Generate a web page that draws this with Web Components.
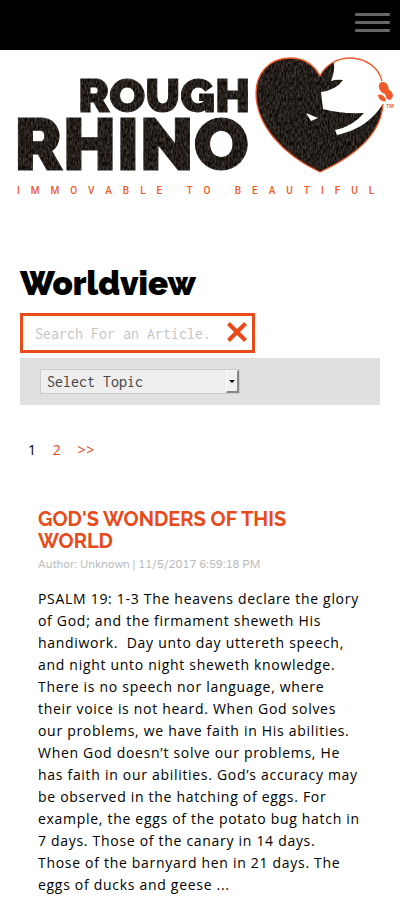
<!DOCTYPE html>
<html lang="en">
<head>
<meta charset="utf-8">
<meta name="viewport" content="width=device-width, initial-scale=1">
<title>Worldview - Rough Rhino</title>
<style>
  body { margin: 0; background: #fff; color: #000; font-family: "Open Sans", "Noto Sans", sans-serif; --accent: #e84a1a; }
</style>
</head>
<body>
<site-header></site-header>
<rhino-logo></rhino-logo>
<blog-page heading="Worldview">
  <article-search></article-search>
  <topic-filter></topic-filter>
  <page-nav></page-nav>
  <article-teaser>
    <a slot="title" href="#article">GOD'S WONDERS OF THIS WORLD</a>
    <span slot="meta">Author: Unknown | 11/5/2017 6:59:18 PM</span>
    PSALM 19: 1-3 The heavens declare the glory of God; and the firmament sheweth His handiwork.&nbsp; Day unto day uttereth speech, and night unto night sheweth knowledge. There is no speech nor language, where their voice is not heard. When God solves our problems, we have faith in His abilities. When God doesn’t solve our problems, He has faith in our abilities. God’s accuracy may be observed in the hatching of eggs. For example, the eggs of the potato bug hatch in 7 days. Those of the canary in 14 days. Those of the barnyard hen in 21 days. The eggs of ducks and geese ...
  </article-teaser>
</blog-page>
<script>
const define = (name, html, setup) => customElements.define(name, class extends HTMLElement {
  constructor() {
    super();
    this.attachShadow({ mode: "open" }).innerHTML = html;
    if (setup) setup(this);
  }
});

define("site-header", `
<style>
  :host { display: flex; justify-content: flex-end; align-items: flex-start; height: 50px; background: #000; }
  button { display: grid; gap: 5px; width: 35px; margin: 13px 10px 0 0; padding: 0; border: 0; background: none; cursor: pointer; }
  i { height: 3px; border-radius: 1px; background: #666; }
</style>
<button type="button" aria-label="Menu"><i></i><i></i><i></i></button>`);

define("rhino-logo", `
<style>
  :host { display: block; }
  a { display: block; }
  svg { display: block; width: 100%; max-width: 480px; height: auto; }
  .name { font-family: Raleway, Lato, sans-serif; font-weight: 900; stroke: #231d18; stroke-width: 1; }
  .tag { font-family: Roboto, sans-serif; font-weight: 500; font-size: 10px; fill: #f15a29; letter-spacing: 11px; }
  .tm { font-family: Inter, sans-serif; font-weight: 600; font-size: 5px; fill: #f15a29; }
</style>
<a href="#home" aria-label="Rough Rhino home">
<svg viewBox="0 0 400 150">
  <defs>
    <filter id="grain" x="0" y="0" width="100%" height="100%" color-interpolation-filters="sRGB">
      <feTurbulence type="fractalNoise" baseFrequency="0.6 0.25" numOctaves="3" seed="4" result="n"/>
      <feColorMatrix in="n" type="matrix" values="0.4 0 0 0 -0.06  0.4 0 0 0 -0.08  0.4 0 0 0 -0.1  0 0 0 0 1" result="g"/>
      <feComposite in="g" in2="SourceGraphic" operator="in"/>
    </filter>
  </defs>
  <g filter="url(#grain)" fill="#231d18">
    <text class="name" x="78" y="62" font-size="47">ROUGH</text>
    <text class="name" x="14" y="120" font-size="72" stroke-width="2">RHINO</text>
    <path d="M320 26C313 13 302 8 290 8C268 8 256 25 256 43C256 75 283 105 320 122C353 107 381 85 383 54C373 69 360 80 337 85L335 80Q352 77 364 63Q340 64 323 59L321 42Q336 40 343 30Q337 29 331 31Q335 22 334 12Q325 17 320 26Z"/>
  </g>
  <path d="M320 26C313 13 302 8 290 8C268 8 256 25 256 43C256 75 283 105 320 122C353 107 381 85 383 54M320 26C326 14 338 8 350 8C366 8 379 18 382 31" fill="none" stroke="#f15a29" stroke-width="1.3"/>
  <path d="M306 63L318 68L311 71Z" fill="#fff"/>
  <path d="M380 33C383 31 388 32 389 40C394 42 394 48 390 50C387 50 386 47 385 44C380 43 377 36 380 33Z" fill="#f15a29"/>
  <path d="M378 45C381 43 386 47 386 51C382 53 378 48 378 45Z" fill="#f15a29"/>
  <text class="tm" x="386" y="58">TM</text>
  <text class="tag" x="17" y="144">IMMOVABLE TO BEAUTIFUL</text>
</svg></a>`);

define("blog-page", `
<style>
  :host { display: block; padding: 64px 20px 0; }
  h1 { margin: 0 0 10px; font: 900 33px/39px Raleway, Inter, sans-serif; }
</style>
<main><h1></h1><slot></slot></main>`, el => {
  el.shadowRoot.querySelector("h1").textContent = el.getAttribute("heading") || "Worldview";
});

define("article-search", `
<style>
  :host { display: block; margin-bottom: 5px; }
  form { display: flex; align-items: center; box-sizing: border-box; width: 235px; max-width: 100%; height: 40px; border: 3px solid var(--accent); background: #fff; }
  input { flex: 1; min-width: 0; padding: 2px 0 0 12px; border: 0; outline: 0; background: none; font: 16px/20px Inconsolata, "Liberation Mono", monospace; color: #333; }
  input::placeholder { color: #c4c4c4; opacity: 1; }
  button { display: block; margin: 0 5px 2px 0; padding: 0; border: 0; background: none; cursor: pointer; }
  svg { display: block; }
</style>
<form><input type="text" aria-label="Search articles" placeholder="Search For an Article."><button type="button" aria-label="Clear search"><svg width="20" height="20" viewBox="0 0 20 20"><path d="M1.5 1.5L18.5 18.5M18.5 1.5L1.5 18.5" stroke="#e84a1a" stroke-width="4.2"/></svg></button></form>`);

define("topic-filter", `
<style>
  :host { display: block; padding: 11px 20px; background: #e0e0e0; }
  label { display: grid; grid-template-columns: minmax(0, 200px); }
  select, span { grid-area: 1 / 1; }
  select { appearance: none; width: 100%; height: 25px; padding: 0 20px 0 6px; border: 1px solid #ccc; border-radius: 0; background: #eee; color: #444; font: 16px/20px Inconsolata, "Liberation Mono", monospace; }
  span { justify-self: end; display: grid; place-items: center; box-sizing: border-box; width: 13px; height: 23px; margin: 1px 1px 0 0; border: 1px solid #f8f8f8; border-right: 2px solid #888; border-bottom: 2px solid #888; background: #f0f0f0; pointer-events: none; }
  span::after { content: ""; border: 3px solid transparent; border-top-color: #000; border-bottom: 0; }
</style>
<label><select aria-label="Topic"><option>Select Topic</option></select><span></span></label>`);

define("page-nav", `
<style>
  nav { display: flex; gap: 16px; padding: 35px 28px 0 8px; font-size: 14px; line-height: 20px; letter-spacing: 0.05em; }
  b { font-weight: 400; }
  a { color: var(--accent); text-decoration: none; }
</style>
<nav aria-label="Pages"><b>1</b><a href="#2">2</a><a href="#next">&gt;&gt;</a></nav>`);

define("article-teaser", `
<style>
  :host { display: block; padding: 48px 18px 0; }
  h2 { margin: 0; font: 700 20px/22px Raleway, Lato, sans-serif; color: var(--accent); }
  ::slotted(a) { color: inherit; text-decoration: none; }
  .meta { margin: 4px 0 16px; font: 11px/16px Varela, "Varela Round", Nunito, "DejaVu Sans", sans-serif; color: #bbb; }
  p { margin: 0; font-size: 14px; line-height: 22px; letter-spacing: 0.05em; }
</style>
<article><h2><slot name="title"></slot></h2><div class="meta"><slot name="meta"></slot></div><p><slot></slot></p></article>`);
</script>
</body>
</html>
